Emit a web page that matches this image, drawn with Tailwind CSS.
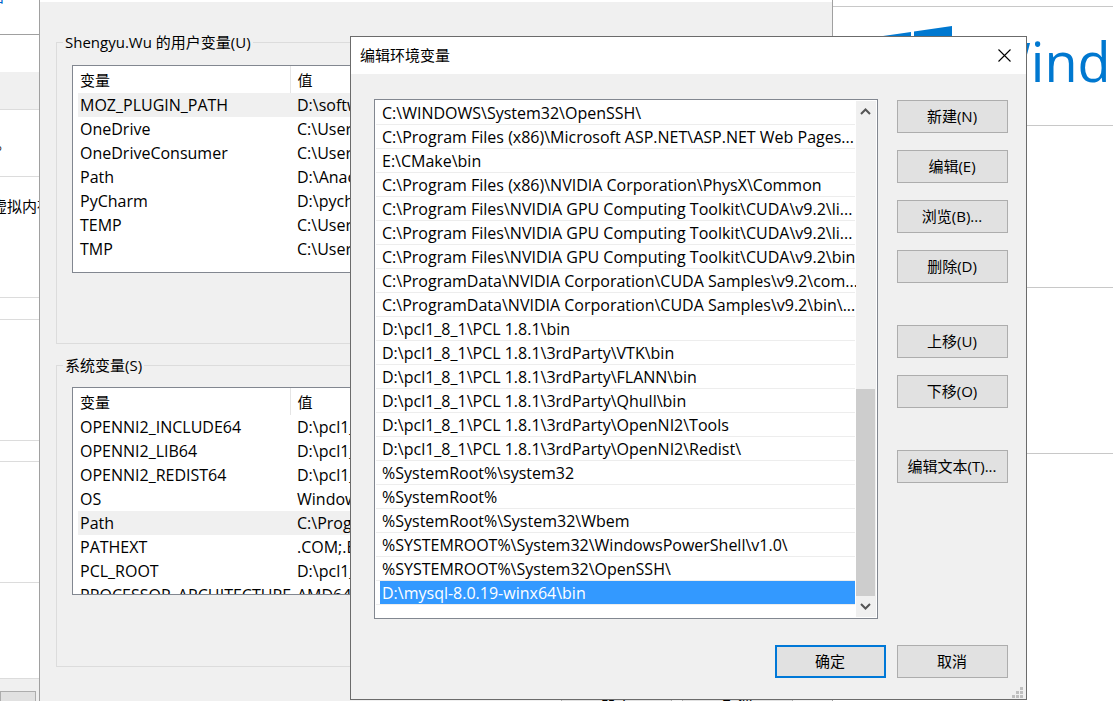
<!DOCTYPE html>
<html lang="zh-CN">
<head>
<meta charset="utf-8">
<title>编辑环境变量</title>
<script src="https://cdn.jsdelivr.net/npm/@tailwindcss/browser@4"></script>
</head>
<body class="bg-white text-black text-[15px] leading-6 font-['Open_Sans','Noto_Sans_CJK_SC',sans-serif]">
<main class="relative h-screen min-h-[701px] overflow-hidden">

  <!-- Control panel windows behind the dialogs -->
  <div class="flex h-full justify-between">
    <section class="flex w-10 flex-col overflow-hidden whitespace-nowrap">
      <div class="flex h-[35px] shrink-0 items-start border-b border-[#a0a0a0]"><a href="#" class="-mt-4 -ml-[10px] text-[#0066cc]">日</a></div>
      <div class="h-[37px] shrink-0"></div>
      <div class="h-[38px] shrink-0 border-b border-[#dcdcdc] bg-[#f0f0f0]"></div>
      <div class="flex h-[67px] shrink-0 items-center border-b border-[#dcdcdc]"><span class="-ml-1">。</span></div>
      <div class="h-[121px] shrink-0 border-b border-[#dcdcdc] pt-[17px]"><span class="-ml-2">虚拟内存</span></div>
      <div class="h-[22px] shrink-0 border-b border-[#dcdcdc]"></div>
      <div class="h-[121px] shrink-0 border-b border-[#dcdcdc]"></div>
      <div class="h-[21px] shrink-0 border-b border-[#dcdcdc]"></div>
      <div class="h-[121px] shrink-0 border-b border-[#dcdcdc]"></div>
      <div class="h-24 shrink-0 border-b border-[#dcdcdc]"></div>
      <div class="flex-1 bg-[#f0f0f0] pt-3"><div class="h-8 w-9 border border-[#adadad] bg-[#e1e1e1]"></div></div>
    </section>
    <section class="flex w-[280px] flex-col">
      <div class="h-[7px] border-b border-[#c8c8c8]"></div>
      <div class="flex h-[119px] items-start border-b border-[#c8c8c8]">
        <svg class="mt-[19px] ml-9 h-20 w-[84px] shrink-0" viewBox="0 0 84 80" fill="#0078d0"><path d="M0 12L42 6V39H0zM45 5.500L83 0V39H45zM0 42H42V75L0 69zM45 42H83V80L45 75z"/></svg>
        <span class="mt-[9px] ml-7 text-[54px] leading-[90px] text-[#0078d0]">Windows</span>
      </div>
      <div class="h-[162px] border-b border-[#c8c8c8]"></div>
      <div class="h-[166px] border-b border-[#c8c8c8]"></div>
    </section>
  </div>

  <!-- Environment variables dialog -->
  <section class="absolute top-0 left-[39px] flex h-full w-[794px] flex-col border-x border-[#a0a0a0] bg-[#f0f0f0] pl-4">
    <div class="-ml-4 h-[2px] shrink-0 bg-white"></div>
    <fieldset class="mt-7 w-[761px] border border-[#dcdcdc] pl-[15px] pb-[70px]">
      <legend class="-ml-[9px] px-[2px]">Shengyu.Wu 的用户变量(U)</legend>
      <div class="mt-[11px] h-[208px] w-[729px] overflow-hidden border border-[#828790] bg-white pl-[5px]">
        <table class="w-full table-fixed text-left text-base">
          <thead class="text-[15px]"><tr class="h-[27px]"><th class="w-[212px] border-r border-[#e5e5e5] pt-[2px] pl-[2px] font-normal">变量</th><th class="pt-[2px] pl-[7px] font-normal">值</th></tr></thead>
          <tbody>
            <tr class="h-6 bg-[#f0f0f0]"><td class="pl-[2px]">MOZ_PLUGIN_PATH</td><td class="pl-[7px]">D:\software</td></tr>
            <tr class="h-6"><td class="pl-[2px]">OneDrive</td><td class="pl-[7px]">C:\Users</td></tr>
            <tr class="h-6"><td class="pl-[2px]">OneDriveConsumer</td><td class="pl-[7px]">C:\Users</td></tr>
            <tr class="h-6"><td class="pl-[2px]">Path</td><td class="pl-[7px]">D:\Anaconda</td></tr>
            <tr class="h-6"><td class="pl-[2px]">PyCharm</td><td class="pl-[7px]">D:\pycharm</td></tr>
            <tr class="h-6"><td class="pl-[2px]">TEMP</td><td class="pl-[7px]">C:\Users</td></tr>
            <tr class="h-6"><td class="pl-[2px]">TMP</td><td class="pl-[7px]">C:\Users</td></tr>
          </tbody>
        </table>
      </div>
    </fieldset>
    <fieldset class="mt-[9px] w-[761px] border border-[#dcdcdc] pl-[15px] pb-[71px]">
      <legend class="-ml-[9px] px-[2px]">系统变量(S)</legend>
      <div class="mt-[10px] h-[208px] w-[729px] overflow-hidden border border-[#828790] bg-white pl-[5px]">
        <table class="w-full table-fixed text-left text-base">
          <thead class="text-[15px]"><tr class="h-[27px]"><th class="w-[212px] border-r border-[#e5e5e5] pt-[2px] pl-[2px] font-normal">变量</th><th class="pt-[2px] pl-[7px] font-normal">值</th></tr></thead>
          <tbody>
            <tr class="h-6"><td class="pl-[2px]">OPENNI2_INCLUDE64</td><td class="pl-[7px]">D:\pcl1_8_1</td></tr>
            <tr class="h-6"><td class="pl-[2px]">OPENNI2_LIB64</td><td class="pl-[7px]">D:\pcl1_8_1</td></tr>
            <tr class="h-6"><td class="pl-[2px]">OPENNI2_REDIST64</td><td class="pl-[7px]">D:\pcl1_8_1</td></tr>
            <tr class="h-6"><td class="pl-[2px]">OS</td><td class="pl-[7px]">Windows_NT</td></tr>
            <tr class="h-6 bg-[#f0f0f0]"><td class="pl-[2px]">Path</td><td class="pl-[7px]">C:\Program</td></tr>
            <tr class="h-6"><td class="pl-[2px]">PATHEXT</td><td class="pl-[7px]">.COM;.EXE</td></tr>
            <tr class="h-6"><td class="pl-[2px]">PCL_ROOT</td><td class="pl-[7px]">D:\pcl1_8_1</td></tr>
            <tr class="h-6"><td class="pl-[2px] whitespace-nowrap">PROCESSOR_ARCHITECTURE</td><td class="pl-[7px]">AMD64</td></tr>
          </tbody>
        </table>
      </div>
    </fieldset>
    <div class="mt-[23px] flex justify-end gap-[10px] pr-[39px]">
      <button class="h-8 w-[111px] shrink-0 border border-[#adadad] bg-[#e1e1e1]">确定</button>
      <button class="h-8 w-[111px] shrink-0 border border-[#adadad] bg-[#e1e1e1]">取消</button>
    </div>
  </section>

  <!-- Edit environment variable dialog -->
  <section class="absolute top-9 left-[350px] flex w-[677px] flex-col border border-[#6b6b6b] bg-[#f0f0f0]">
    <header class="flex h-[37px] items-center justify-between bg-white pr-[15px] pb-px pl-[9px]">
      <h1>编辑环境变量</h1>
      <button aria-label="关闭"><svg class="size-[13px]" viewBox="0 0 13 13" fill="none" stroke="#000" stroke-width="1.100"><path d="M.5.5l12 12M12.500.5l-12 12"/></svg></button>
    </header>
    <div class="flex gap-[19px] pt-[25px] pr-[18px] pl-[23px]">
      <div class="flex h-[520px] flex-1 border border-[#828790] bg-white p-px">
        <ul class="w-[479px] text-base whitespace-nowrap">
          <li class="h-6 border-b border-[#ededed] pl-[6px]">C:\WINDOWS\System32\OpenSSH\</li>
          <li class="h-6 border-b border-[#ededed] pl-[6px]">C:\Program Files (x86)\Microsoft ASP.NET\ASP.NET Web Pages...</li>
          <li class="h-6 border-b border-[#ededed] pl-[6px]">E:\CMake\bin</li>
          <li class="h-6 border-b border-[#ededed] pl-[6px]">C:\Program Files (x86)\NVIDIA Corporation\PhysX\Common</li>
          <li class="h-6 border-b border-[#ededed] pl-[6px]">C:\Program Files\NVIDIA GPU Computing Toolkit\CUDA\v9.2\li...</li>
          <li class="h-6 border-b border-[#ededed] pl-[6px]">C:\Program Files\NVIDIA GPU Computing Toolkit\CUDA\v9.2\li...</li>
          <li class="h-6 border-b border-[#ededed] pl-[6px]">C:\Program Files\NVIDIA GPU Computing Toolkit\CUDA\v9.2\bin</li>
          <li class="h-6 border-b border-[#ededed] pl-[6px]">C:\ProgramData\NVIDIA Corporation\CUDA Samples\v9.2\com...</li>
          <li class="h-6 border-b border-[#ededed] pl-[6px]">C:\ProgramData\NVIDIA Corporation\CUDA Samples\v9.2\bin\...</li>
          <li class="h-6 border-b border-[#ededed] pl-[6px]">D:\pcl1_8_1\PCL 1.8.1\bin</li>
          <li class="h-6 border-b border-[#ededed] pl-[6px]">D:\pcl1_8_1\PCL 1.8.1\3rdParty\VTK\bin</li>
          <li class="h-6 border-b border-[#ededed] pl-[6px]">D:\pcl1_8_1\PCL 1.8.1\3rdParty\FLANN\bin</li>
          <li class="h-6 border-b border-[#ededed] pl-[6px]">D:\pcl1_8_1\PCL 1.8.1\3rdParty\Qhull\bin</li>
          <li class="h-6 border-b border-[#ededed] pl-[6px]">D:\pcl1_8_1\PCL 1.8.1\3rdParty\OpenNI2\Tools</li>
          <li class="h-6 border-b border-[#ededed] pl-[6px]">D:\pcl1_8_1\PCL 1.8.1\3rdParty\OpenNI2\Redist\</li>
          <li class="h-6 border-b border-[#ededed] pl-[6px]">%SystemRoot%\system32</li>
          <li class="h-6 border-b border-[#ededed] pl-[6px]">%SystemRoot%</li>
          <li class="h-6 border-b border-[#ededed] pl-[6px]">%SystemRoot%\System32\Wbem</li>
          <li class="h-6 border-b border-[#ededed] pl-[6px]">%SYSTEMROOT%\System32\WindowsPowerShell\v1.0\</li>
          <li class="h-6 border-b border-[#ededed] pl-[6px]">%SYSTEMROOT%\System32\OpenSSH\</li>
          <li class="h-6 border-b border-[#ededed] pl-1"><div class="h-[23px] bg-[#3399ff] pl-[2px] text-white">D:\mysql-8.0.19-winx64\bin</div></li>
        </ul>
        <div class="ml-px flex w-5 flex-col bg-[#f0f0f0]">
          <svg class="h-[21px] w-[19px]" viewBox="0 0 19 21" fill="none" stroke="#555" stroke-width="2"><path d="M5 13l4.500-4.500L14 13"/></svg>
          <div class="flex-1"></div>
          <div class="h-[207px] w-[19px] bg-[#cdcdcd]"></div>
          <svg class="h-[21px] w-[19px]" viewBox="0 0 19 21" fill="none" stroke="#555" stroke-width="2"><path d="M5 8l4.500 4.500L14 8"/></svg>
        </div>
      </div>
      <div class="flex w-[111px] flex-col gap-[17px] pt-px">
        <button class="h-[33px] border border-[#adadad] bg-[#e1e1e1] pr-px pb-px">新建(N)</button>
        <button class="h-[33px] border border-[#adadad] bg-[#e1e1e1] pr-px pb-px">编辑(E)</button>
        <button class="h-[33px] border border-[#adadad] bg-[#e1e1e1] pr-px pb-px">浏览(B)...</button>
        <button class="h-[33px] border border-[#adadad] bg-[#e1e1e1] pr-px pb-px">删除(D)</button>
        <button class="mt-[25px] h-[33px] border border-[#adadad] bg-[#e1e1e1] pr-px pb-px">上移(U)</button>
        <button class="h-[33px] border border-[#adadad] bg-[#e1e1e1] pr-px pb-px">下移(O)</button>
        <button class="mt-[25px] h-[33px] border border-[#adadad] bg-[#e1e1e1] pr-px pb-px">编辑文本(T)...</button>
      </div>
    </div>
    <footer class="mt-[26px] flex justify-end gap-[11px] pr-[18px]">
      <button class="h-[33px] w-[111px] border-2 border-[#0078d7] bg-[#e1e1e1] pr-px pb-px">确定</button>
      <button class="h-[33px] w-[111px] border border-[#adadad] bg-[#e1e1e1] pr-px pb-px">取消</button>
    </footer>
    <div class="flex justify-end pt-[9px] pr-[3px] pb-px">
      <svg class="size-[11px]" viewBox="0 0 11 11" fill="#bfbfbf"><path d="M8 0h3v3H8zM4 4h3v3H4zM8 4h3v3H8zM0 8h3v3H0zM4 8h3v3H4zM8 8h3v3H8z"/></svg>
    </div>
  </section>
</main>
</body>
</html>
